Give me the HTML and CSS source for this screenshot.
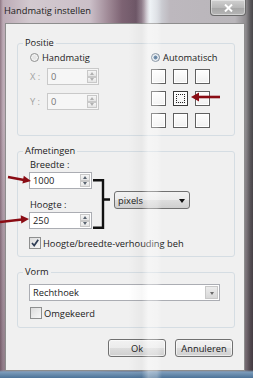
FILE: index.html
```html
<!DOCTYPE html>
<html lang="nl">
<head>
    <meta charset="UTF-8">
    <meta name="viewport" content="width=device-width, initial-scale=1.0">
    <title>Handmatig instellen</title>
    <link rel="stylesheet" href="styles.css">
</head>
<body>
<div class="window">
    <header class="titlebar">
        <span class="title">Handmatig instellen</span>
        <span class="close">
            <svg width="9" height="8" viewBox="0 0 9 8"><path d="M1 0.5 L8 7.5 M8 0.5 L1 7.5" stroke="#fff" stroke-width="2"/></svg>
        </span>
    </header>

    <main class="client">
        <fieldset class="group">
            <legend>Positie</legend>
            <div class="position-body">
                <div class="position-manual">
                    <div class="option"><span class="radio"></span><span>Handmatig</span></div>
                    <div class="coord">
                        <span class="coord-label">X :</span>
                        <div class="spin spin-disabled">
                            <span class="spin-value">0</span>
                            <span class="spin-buttons"><span class="spin-up"></span><span class="spin-down"></span></span>
                        </div>
                    </div>
                    <div class="coord coord-y">
                        <span class="coord-label">Y :</span>
                        <div class="spin spin-disabled">
                            <span class="spin-value">0</span>
                            <span class="spin-buttons"><span class="spin-up"></span><span class="spin-down"></span></span>
                        </div>
                    </div>
                </div>
                <div class="position-auto">
                    <div class="option"><span class="radio radio-checked"></span><span>Automatisch</span></div>
                    <div class="anchor-grid">
                        <span class="anchor"></span>
                        <span class="anchor"></span>
                        <span class="anchor"></span>
                        <span class="anchor"></span>
                        <span class="anchor anchor-active"></span>
                        <span class="anchor"></span>
                        <span class="anchor"></span>
                        <span class="anchor"></span>
                        <span class="anchor"></span>
                    </div>
                </div>
            </div>
        </fieldset>

        <fieldset class="group group-gap">
            <legend>Afmetingen</legend>
            <div class="size-body">
                <div class="size-row">
                    <div class="size-fields">
                        <div class="field-label">Breedte :</div>
                        <div class="spin spin-size">
                            <span class="spin-value">1000</span>
                            <span class="spin-buttons"><span class="spin-up"></span><span class="spin-down"></span></span>
                        </div>
                        <div class="field-label field-label-next">Hoogte :</div>
                        <div class="spin spin-size">
                            <span class="spin-value">250</span>
                            <span class="spin-buttons"><span class="spin-up"></span><span class="spin-down"></span></span>
                        </div>
                    </div>
                    <svg class="bracket" width="17" height="50" viewBox="0 0 17 50">
                        <path d="M0 1.2 H10 V48.8 H0 M10 20.5 H17" fill="none" stroke="#111" stroke-width="2.4"/>
                    </svg>
                    <div class="combo-button">
                        <span>pixels</span>
                        <span class="combo-arrow"></span>
                    </div>
                </div>
                <div class="option option-check">
                    <span class="checkbox">
                        <svg width="10" height="10" viewBox="0 0 10 10"><path d="M2 5 L4.2 7.6 L8.2 1.8" fill="none" stroke="#2e3d55" stroke-width="1.7"/></svg>
                    </span>
                    <span>Hoogte/breedte-verhouding beh</span>
                </div>
            </div>
        </fieldset>

        <fieldset class="group group-gap">
            <legend>Vorm</legend>
            <div class="shape-body">
                <div class="combo-field">
                    <span class="combo-value">Rechthoek</span>
                    <span class="combo-drop"><span class="combo-arrow combo-arrow-grey"></span></span>
                </div>
                <div class="option option-check option-reverse">
                    <span class="checkbox"></span>
                    <span>Omgekeerd</span>
                </div>
            </div>
        </fieldset>

        <div class="actions">
            <button class="btn">Ok</button>
            <button class="btn">Annuleren</button>
        </div>
    </main>

    <div class="glare"></div>

    <svg class="annotations" width="253" height="378" viewBox="0 0 253 378">
        <g fill="#8a0c14" stroke="#8a0c14">
            <line x1="220" y1="97" x2="197" y2="97" stroke-width="2.6"/>
            <polygon points="191,97 199,92.5 199,101.5" stroke="none"/>
            <line x1="8" y1="177" x2="24" y2="180" stroke-width="2.6"/>
            <polygon points="31,181 23.8,175.7 22.4,183.5" stroke="none"/>
            <line x1="0" y1="222" x2="22" y2="219.5" stroke-width="2.6"/>
            <polygon points="29,219 20.7,215.3 21.3,223.6" stroke="none"/>
        </g>
    </svg>
</div>
</body>
</html>
```

FILE: styles.css
```css
* {
    box-sizing: border-box;
}

body {
    margin: 0;
    font-family: "Open Sans", "Noto Sans", sans-serif;
    font-size: 9.3px;
    color: #1a1a1a;
    background: #5e4e5a;
}

.window {
    position: relative;
    width: 253px;
    height: 378px;
    display: flex;
    flex-direction: column;
    overflow: hidden;
    background:
        linear-gradient(to bottom, transparent 370px, #7c9cbb 372px, #4d7398 378px),
        linear-gradient(to bottom, transparent 120px, rgba(60, 35, 50, 0.35) 378px),
        linear-gradient(to right, #8f7784 0, #bcaab5 3px, #d2c9cf 30px, #cbbfc8 90px, #a08a97 108px, #7d6373 122px, #6f5868 136px, #a493a0 144px, #e6ecf1 150px, #d2d6dc 157px, #bdb8be 170px, #b9b6ba 235px, #8d8a8d 246px, #5d5b5e 250px, #49474a 253px);
}

/* title bar */
.titlebar {
    height: 23px;
    display: flex;
    align-items: flex-start;
    justify-content: space-between;
    padding: 0 7px 0 4px;
}

.title {
    line-height: 22px;
    color: #202020;
}

.close {
    width: 36px;
    height: 16px;
    display: flex;
    align-items: center;
    justify-content: center;
    border: 1px solid #6a6a6a;
    border-top: none;
    border-radius: 0 0 4px 4px;
    background: linear-gradient(#d0d0d0, #b8b8b8 50%, #a6a6a6 51%, #b5b5b5);
    box-shadow: inset 0 0 0 1px rgba(255, 255, 255, 0.4);
}

/* dialog body */
.client {
    flex: 1;
    margin: 0 8px 7px 5px;
    padding: 12px 9px 0 11px;
    background: #f0f0f0;
    border: 1px solid #8d8d8d;
}

.group {
    margin: 0;
    padding: 0;
    min-width: 0;
    border: 1px solid #d5dde3;
    border-radius: 3px;
}

.group legend {
    margin-left: 5px;
    padding: 0 2px;
    line-height: 14px;
}

.group-gap {
    margin-top: 8px;
}

.option {
    display: flex;
    align-items: center;
    height: 14px;
    gap: 3px;
    white-space: nowrap;
}

.radio {
    width: 9px;
    height: 9px;
    border-radius: 50%;
    border: 1px solid #8e8f8f;
    background: radial-gradient(circle, #e6e6e6 30%, #f8f8f8 70%);
}

.radio-checked {
    border-color: #5a6d82;
    background: radial-gradient(circle, #2c4a6c 0, #3e6d99 35%, #cfd9e2 45%, #f4f6f8 75%);
}

/* Positie */
.position-body {
    display: grid;
    grid-template-columns: 121px 1fr;
    padding: 0 0 7px 12px;
}

.coord {
    display: flex;
    align-items: center;
    margin-top: 4px;
}

.coord-y {
    margin-top: 8px;
}

.coord-label {
    width: 17px;
    color: #a3a3a3;
}

.spin {
    display: flex;
    justify-content: space-between;
    width: 52px;
    height: 17px;
    border: 1px solid #abadb3;
    background: #fff;
}

.spin-disabled {
    border-color: #c9c9c9;
    background: #f6f6f6;
    color: #777;
}

.spin-value {
    padding-left: 3px;
    line-height: 15px;
}

.spin-buttons {
    display: flex;
    flex-direction: column;
    width: 10px;
    margin: 1px;
}

.spin-up,
.spin-down {
    flex: 1;
    display: flex;
    align-items: center;
    justify-content: center;
    border: 1px solid #c8c8c8;
    background: linear-gradient(#f6f6f6, #e4e4e4);
}

.spin-up::after {
    content: "";
    border: 2px solid transparent;
    border-bottom: 3px solid #5b6570;
    border-top: none;
}

.spin-down::after {
    content: "";
    border: 2px solid transparent;
    border-top: 3px solid #5b6570;
    border-bottom: none;
}

.spin-disabled .spin-up::after {
    border-bottom-color: #b0b0b0;
}

.spin-disabled .spin-down::after {
    border-top-color: #b0b0b0;
}

.anchor-grid {
    display: grid;
    grid-template-columns: repeat(3, 15px);
    grid-auto-rows: 15px;
    gap: 7px;
    margin-top: 5px;
}

.anchor {
    border: 1px solid #606060;
    background: linear-gradient(#fefefe, #f0f0f0);
    box-shadow: inset 0 0 0 1px #fff;
}

.anchor-active {
    border-color: #3a3a3a;
    position: relative;
}

.anchor-active::after {
    content: "";
    position: absolute;
    inset: 2px;
    border: 1px dotted #222;
}

/* Afmetingen */
.size-body {
    padding: 0 0 6px 11px;
}

.size-row {
    display: flex;
    align-items: flex-start;
}

.field-label {
    height: 14px;
    line-height: 14px;
    padding-left: 1px;
}

.field-label-next {
    margin-top: 9px;
}

.spin-size {
    width: 63px;
}

.bracket {
    margin: 21px 0 0 1px;
}

.combo-button {
    display: flex;
    align-items: center;
    justify-content: space-between;
    width: 76px;
    height: 18px;
    margin: 33px 0 0 4px;
    padding: 0 4px 0 3px;
    border: 1px solid #707070;
    border-radius: 3px;
    background: linear-gradient(#f2f2f2, #ebebeb 50%, #dddddd 51%, #cfcfcf);
}

.combo-arrow {
    border: 3px solid transparent;
    border-top: 4px solid #111;
    border-bottom: none;
    margin-top: 1px;
}

.combo-arrow-grey {
    border-top-color: #6a6a6a;
    border-width: 2px;
    border-top-width: 3px;
}

.option-check {
    margin-top: 7px;
    gap: 2px;
}

.checkbox {
    display: flex;
    align-items: center;
    justify-content: center;
    width: 12px;
    height: 12px;
    border: 1px solid #8e8f8f;
    background: linear-gradient(135deg, #dcdcdc, #f8f8f8);
}

/* Vorm */
.shape-body {
    padding: 0 0 7px 11px;
}

.combo-field {
    display: flex;
    justify-content: space-between;
    width: 191px;
    height: 17px;
    margin-top: 5px;
    border: 1px solid #abadb3;
    background: #fff;
}

.combo-value {
    padding-left: 3px;
    line-height: 15px;
}

.combo-drop {
    width: 13px;
    display: flex;
    align-items: center;
    justify-content: center;
    margin: 1px;
    border: 1px solid #c8c8c8;
    background: linear-gradient(#ececec, #d8d8d8);
}

.option-reverse {
    margin-top: 5px;
    padding-left: 1px;
}

/* buttons */
.actions {
    display: flex;
    justify-content: flex-end;
    gap: 9px;
    margin-top: 11px;
    padding-right: 2px;
}

.btn {
    width: 58px;
    height: 18px;
    padding: 0;
    font: inherit;
    color: #1a1a1a;
    border: 1px solid #707070;
    border-radius: 3px;
    background: linear-gradient(#f2f2f2, #ebebeb 50%, #dddddd 51%, #cfcfcf);
    box-shadow: inset 0 0 0 1px rgba(255, 255, 255, 0.6);
}

/* reflection and red annotations over the screenshot */
.glare {
    position: absolute;
    top: 0;
    bottom: 0;
    left: 128px;
    width: 34px;
    pointer-events: none;
    background: linear-gradient(to right, rgba(0, 0, 0, 0) 0, rgba(0, 0, 0, 0.03) 40%, rgba(255, 255, 255, 0.35) 60%, rgba(255, 255, 255, 0.28) 85%, rgba(255, 255, 255, 0) 100%);
}

.annotations {
    position: absolute;
    top: 0;
    left: 0;
    pointer-events: none;
}
```
